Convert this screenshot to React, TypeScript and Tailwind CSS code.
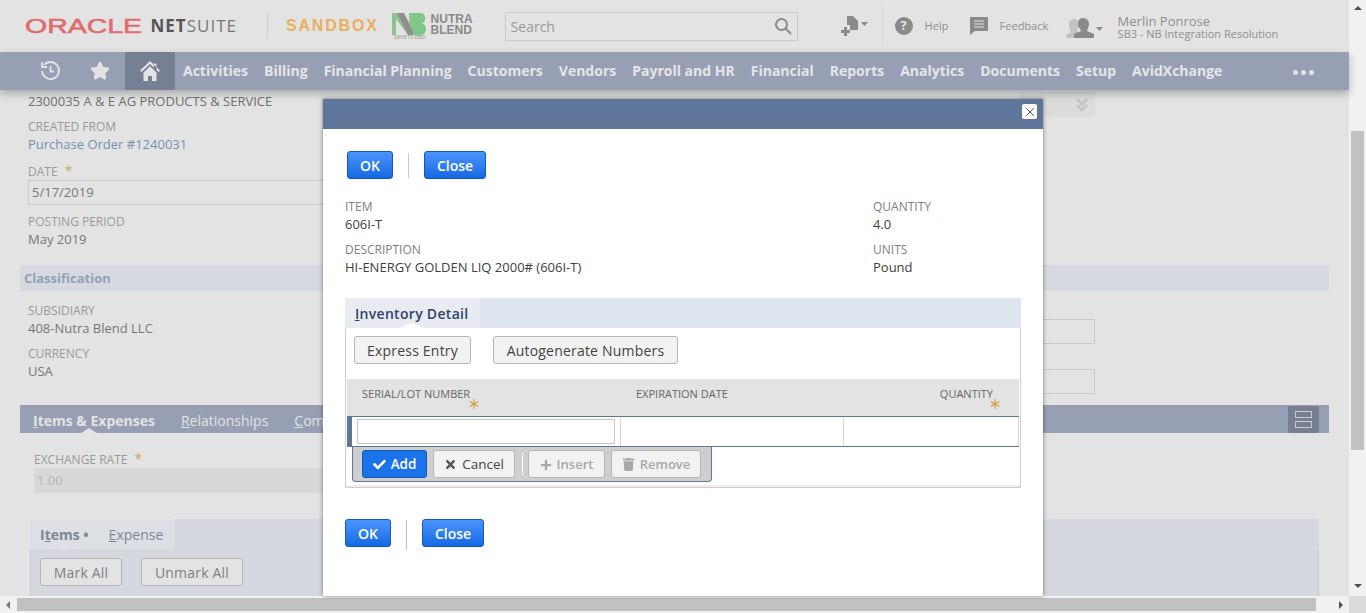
import { ChevronsDown, Star, X } from "lucide-react";
import { FaCheck, FaPlus, FaTimes, FaTrash } from "react-icons/fa";

const navItems = [
  "Activities",
  "Billing",
  "Financial Planning",
  "Customers",
  "Vendors",
  "Payroll and HR",
  "Financial",
  "Reports",
  "Analytics",
  "Documents",
  "Setup",
  "AvidXchange",
];

const Label = ({ children, dark }: { children: React.ReactNode; dark?: boolean }) => (
  <div className={`pt-[1px] text-[12px] leading-[17px] uppercase ${dark ? "text-[#808080]" : "text-[#999]"}`}>{children}</div>
);

const Field = ({ label, value, link, dark }: { label: string; value: string; link?: boolean; dark?: boolean }) => (
  <div className="mb-[7px]">
    <Label dark={dark}>{label}</Label>
    <div className={`text-[13px] leading-[18px] ${link ? "text-[#7390b2]" : dark ? "text-[#404040]" : "text-[#777]"}`}>{value}</div>
  </div>
);

const BlueButton = ({ children, className }: { children: React.ReactNode; className?: string }) => (
  <button className={`h-[28px] rounded-[3px] border border-[#125ab2] bg-linear-to-b from-[#4a94fb] to-[#1469e3] text-[14px] font-semibold text-white ${className}`}>
    {children}
  </button>
);

const GrayButton = ({ children, className }: { children: React.ReactNode; className?: string }) => (
  <button className={`flex h-[28px] items-center justify-center gap-[5px] rounded-[3px] border border-[#b5b5b5] bg-[#f2f2f2] ${className}`}>
    {children}
  </button>
);

const RequiredStar = ({ className }: { className: string }) => (
  <svg width="10" height="10" viewBox="0 0 10 10" className={`absolute ${className}`} stroke="#d39b3a" strokeWidth="1.1">
    <path d="M5 0v10M.7 2.500l8.600 5M.7 7.500l8.600-5" />
  </svg>
);

const Modal = () => (
  <div className="absolute left-[323px] top-[99px] z-20 h-[497px] w-[720px] bg-white shadow-[0_0_4px_rgba(0,0,0,0.5)]">
    <div className="flex h-[30px] items-start justify-end bg-[#5f7599] pr-[6px] pt-[5px]">
      <div className="flex h-[15px] w-[15px] items-center justify-center rounded-[2px] bg-white">
        <X size={14} strokeWidth={1.3} className="text-[#222]" />
      </div>
    </div>
    <div className="flex items-center px-[24px] pt-[22px]">
      <BlueButton className="w-[46px]">OK</BlueButton>
      <div className="mx-[15px] h-[25px] w-px bg-[#c8c8c8]" />
      <BlueButton className="w-[62px]">Close</BlueButton>
    </div>
    <div className="mt-[18px] flex px-[22px]">
      <div className="w-[528px]">
        <Field dark label="Item" value="606I-T" />
        <Field dark label="Description" value="HI-ENERGY GOLDEN LIQ 2000# (606I-T)" />
      </div>
      <div>
        <Field dark label="Quantity" value="4.0" />
        <Field dark label="Units" value="Pound" />
      </div>
    </div>
    <div className="mx-[22px] mt-[15px] w-[676px]">
      <div className="h-[30px] bg-[#dfe5ee]">
        <div className="relative flex h-[30px] w-[135px] items-center bg-[#e8ecf2] pl-[10px] text-[14px] font-semibold tracking-[0.3px] text-[#2f4468]">
          <span>
            <span className="underline">I</span>nventory Detail
          </span>
          <div className="absolute bottom-0 left-[55px] h-0 w-0 border-x-[12px] border-b-[5px] border-x-transparent border-b-white" />
        </div>
      </div>
      <div className="h-[160px] border border-t-0 border-[#cfcfcf] px-[1px] shadow-[inset_0_-2px_0_#eeeeee]">
        <div className="flex gap-[22px] pl-[7px] pt-[8px] text-[14px] tracking-[0.2px] text-[#444]">
          <GrayButton className="w-[117px]">Express Entry</GrayButton>
          <GrayButton className="w-[185px]">Autogenerate Numbers</GrayButton>
        </div>
        <div className="mt-[15px] flex h-[37px] bg-[#e3e3e3] text-[11px] text-[#666]">
          <div className="relative w-[274px] pl-[15px] pt-[7px]">
            SERIAL/LOT NUMBER
            <RequiredStar className="left-[122px] top-[20px]" />
          </div>
          <div className="w-[223px] pl-[15px] pt-[7px]">EXPIRATION DATE</div>
          <div className="relative flex-1 pr-[26px] pt-[7px] text-right">
            QUANTITY
            <RequiredStar className="right-[19px] top-[20px]" />
          </div>
        </div>
        <div className="flex h-[31px] border-y border-l-[5px] border-[#5f7599]">
          <div className="w-[269px] border-r border-[#d5d5d5] pl-[5px] pt-[2px]">
            <div className="h-[25px] w-[258px] border border-[#c4c4c4] bg-white" />
          </div>
          <div className="w-[223px] border-r border-[#d5d5d5]" />
          <div className="flex-1 border-r border-[#d5d5d5]" />
        </div>
        <div className="ml-[5px] flex h-[35px] w-[360px] items-center gap-[6px] rounded-b-[4px] border border-t-0 border-[#5f7599] bg-[#cfcfcf] pl-[9px]">
          <button className="flex h-[28px] w-[65px] items-center justify-center gap-[5px] rounded-[3px] border border-[#125ab2] bg-[#1a73e8] text-[13.500px] font-semibold text-white">
            <FaCheck size={13} />
            Add
          </button>
          <GrayButton className="w-[82px] text-[13.500px] font-medium text-[#444]">
            <FaTimes size={13} className="text-[#555]" />
            Cancel
          </GrayButton>
          <div className="ml-[1px] mr-[-1px] h-[22px] w-px bg-white" />
          <GrayButton className="w-[77px] pt-[1px] text-[13px] font-semibold text-[#a8a8a8]">
            <FaPlus size={12} />
            Insert
          </GrayButton>
          <GrayButton className="w-[90px] pt-[1px] text-[13px] font-semibold text-[#a8a8a8]">
            <FaTrash size={13} />
            Remove
          </GrayButton>
        </div>
      </div>
    </div>
    <div className="mt-[31px] flex items-start px-[22px]">
      <BlueButton className="w-[46px]">OK</BlueButton>
      <div className="mx-[15px] mt-[1px] h-[30px] w-px bg-[#bbb]" />
      <BlueButton className="w-[62px]">Close</BlueButton>
    </div>
  </div>
);

export default function App() {
  return (
    <div className="relative flex h-[613px] w-[1366px] overflow-hidden bg-[#e3e3e3] font-['Open_Sans',sans-serif]">
      <div className="flex h-[613px] w-[1349px] flex-col">
        {/* top bar */}
        <header className="flex h-[52px] shrink-0 items-center">
          <div className="ml-[25px] flex w-[212px] items-center">
            <div className="w-[117px] font-['Liberation_Sans',sans-serif] text-[19.500px] leading-[20px] text-[#e06c6c] [-webkit-text-stroke:0.5px_#e06c6c]">
              <span className="inline-block origin-left scale-x-[1.46]">ORACLE</span>
            </div>
            <div className="ml-[10px] whitespace-nowrap text-[17px] font-bold leading-[20px] tracking-[1px] text-[#555]">
              NET<span className="font-normal text-[#777]">SUITE</span>
            </div>
          </div>
          <div className="ml-[30px] h-[26px] w-px bg-[#ccc]" />
          <span className="ml-[18px] font-['Liberation_Sans',sans-serif] text-[16px] font-bold tracking-[1.800px] text-[#e8b05c]">
            SANDBOX
          </span>
          <div className="ml-[13px] flex w-[36px] flex-col items-center">
            <svg width="36" height="22" viewBox="0 0 36 22">
              <path d="M0 0h6l11 16V0h4v22h-5L4 6v16H0z" fill="#8cc48c" />
              <path d="M5 0h7l11 22h-7z" fill="#8f8f8f" />
              <path d="M21 0h8c5 0 6 9 1 10.500 6 1 5 11.500-1 11.500h-8z" fill="#7fc68a" />
            </svg>
            <div className="whitespace-nowrap text-[4.500px] leading-[5px] text-[#8a8a8a]">DRIVE TO FEED</div>
          </div>
          <div className="ml-[3px] mb-[3px] w-[42px] font-['Liberation_Sans',sans-serif] text-[12px] font-bold leading-[11px] text-[#8a8a8a]">
            <div>NUTRA</div>
            <div>BLEND</div>
          </div>
          <div className="ml-[32px] flex h-[29px] w-[293px] items-center justify-between border border-[#c9c9c9] px-[5px] text-[14px] text-[#999]">
            Search
            <svg width="18" height="18" viewBox="0 0 18 18" fill="none" stroke="#8a8a8a" strokeWidth="2">
              <circle cx="7.500" cy="7.500" r="5.500" />
              <path d="M11.500 11.500 17 17" />
            </svg>
          </div>
          <svg width="28" height="20" viewBox="0 0 28 20" className="ml-[43px]" fill="#8a8a8a">
            <path d="M6 0h6l5 5v9H9V9H6z" />
            <path d="M3 11h3v3h3v3H6v3H3v-3H0v-3h3z" />
            <path d="M20 6h7l-3.500 4z" />
          </svg>
          <div className="ml-[13px] h-[42px] w-px bg-[#d5d5d5]" />
          <div className="ml-[12px] flex h-[18px] w-[18px] items-center justify-center rounded-full bg-[#8a8a8a] text-[13px] font-bold text-[#e3e3e3]">
            ?
          </div>
          <span className="ml-[12px] mt-[1px] w-[24px] text-[11px] text-[#8f8f8f]">Help</span>
          <svg width="20" height="20" viewBox="0 0 20 20" className="ml-[20px]" fill="#8a8a8a">
            <path d="M1 1h18v14H6l-5 4z" />
            <path d="M5 5h10M5 8h10M5 11h10" stroke="#e3e3e3" strokeWidth="1" />
          </svg>
          <span className="ml-[11px] mt-[1px] w-[49px] text-[11px] text-[#8f8f8f]">Feedback</span>
          <svg width="37" height="24" viewBox="0 0 37 24" className="ml-[17px] mt-[4px]">
            <path d="M8 3c3 0 5 2 5 6 0 3-2 5-2 6l3 2v5H0v-3l5-3c0-1-2-3-2-6 0-5 2-7 5-7z" fill="#c2c2c2" />
            <path d="M17 2c4 0 6 3 6 6s-2 6-2 7l7 3v4H8v-4l7-3c0-1-3-4-3-7s1-6 5-6z" fill="#8a8a8a" />
            <path d="M30 11h7l-3.500 4z" fill="#8a8a8a" />
          </svg>
          <div className="ml-[15px] pt-[3px]">
            <div className="text-[13px] leading-[13px] text-[#8f8f8f]">Merlin Ponrose</div>
            <div className="text-[11px] leading-[12px] text-[#8f8f8f]">SB3 - NB Integration Resolution</div>
          </div>
        </header>

        {/* nav */}
        <nav className="relative z-10 flex h-[38px] shrink-0 items-center bg-[#969fb3] shadow-[0_4px_8px_rgba(0,0,0,0.25)]">
          <div className="flex w-[125px] items-center">
            <svg width="22" height="22" viewBox="0 0 22 22" className="ml-[39px]" fill="none" stroke="#e3e3e3" strokeWidth="1.800">
              <path d="M5 5a8.500 8.500 0 1 1-2 6" />
              <path d="M3 2v5h5" />
              <path d="M11.500 6v5.500H15" />
            </svg>
            <Star size={20} className="ml-[29px] fill-[#e3e3e3] text-[#e3e3e3]" />
          </div>
          <div className="flex h-[38px] w-[50px] items-center justify-center bg-[#767f94]">
            <svg width="22" height="22" viewBox="0 0 22 22" fill="#e3e3e3">
              <path d="M11 1 1 10.500l1.500 1.500L11 4l4 3.800V3.500h2.500v6.600L19.500 12l1.500-1.500z" />
              <path d="M4.500 12.500 11 6.300l6.500 6.200V21h-4.500v-5H9v5H4.500z" />
            </svg>
          </div>
          <div className="ml-[8px] flex gap-[16px] pb-[2px] text-[14px] font-bold text-[#e6e6e6]">
            {navItems.map((item) => (
              <span key={item}>{item}</span>
            ))}
          </div>
          <div className="ml-[71px] mt-[3px] flex gap-[3px]">
            <div className="h-[5px] w-[5px] rounded-full bg-[#e3e3e3]" />
            <div className="h-[5px] w-[5px] rounded-full bg-[#e3e3e3]" />
            <div className="h-[5px] w-[5px] rounded-full bg-[#e3e3e3]" />
          </div>
        </nav>

        {/* page behind the dialog */}
        <main className="relative flex-1 overflow-hidden">
          <div className="absolute left-[1020px] top-[2px] flex h-[25px] w-[75px] items-center justify-end bg-[#dcdcdc] pr-[3px]">
            <ChevronsDown size={20} strokeWidth={3.500} className="text-[#c6c6c6]" />
          </div>
          <div className="px-[28px] pt-[2px]">
            <div className="mb-[7px] text-[13px] leading-[18px] text-[#6f6f6f]">2300035 A &amp; E AG PRODUCTS &amp; SERVICE</div>
            <Field label="Created From" value="Purchase Order #1240031" link />
            <div className="h-[1px]" />
            <Label>
              Date <span className="ml-[4px] text-[14px] text-[#c9a66b]">*</span>
            </Label>
            <div className="mb-[7px] flex h-[25px] w-[320px] items-center border border-[#c9c9c9] pl-[3px] pt-[1px] text-[13px] text-[#777]">5/17/2019</div>
            <Field label="Posting Period" value="May 2019" />
          </div>
          <div className="mx-[20px] mt-[17px] flex h-[26px] items-center bg-[#d6dae0] pl-[4px] pt-[1px] text-[13px] font-bold text-[#94a0b4]">
            Classification
          </div>
          <div className="relative px-[28px] pt-[10px]">
            <Field label="Subsidiary" value="408-Nutra Blend LLC" />
            <Field label="Currency" value="USA" />
            <div className="absolute left-[1040px] top-[28px] h-[25px] w-[55px] border border-[#c9c9c9]" />
            <div className="absolute left-[1040px] top-[78px] h-[25px] w-[55px] border border-[#c9c9c9]" />
          </div>
          <div className="mx-[20px] mt-[25px] flex h-[28px] items-center justify-between bg-[#969fb3]">
            <div className="relative flex h-[28px] items-center pl-[13px] pt-[2px] text-[14px] text-[#e3e3e3]">
              <span className="font-bold">
                <span className="underline">I</span>tems &amp; Expenses
              </span>
              <span className="ml-[26px]">
                <span className="underline">R</span>elationships
              </span>
              <span className="ml-[26px]">
                <span className="underline">C</span>om
              </span>
              <div className="absolute bottom-0 left-[61px] h-0 w-0 border-x-[8px] border-b-[5px] border-x-transparent border-b-[#e3e3e3]" />
            </div>
            <div className="mr-[10px] flex h-[27px] w-[31px] flex-col items-center justify-center gap-[3px] rounded-[2px] bg-[#767f94]">
              <div className="h-[7px] w-[17px] border border-[#c9c9c9]" />
              <div className="h-[7px] w-[17px] border border-[#c9c9c9]" />
            </div>
          </div>
          <div className="px-[34px] pt-[16px]">
            <Label>
              Exchange Rate <span className="ml-[4px] text-[14px] text-[#c9a66b]">*</span>
            </Label>
            <div className="flex h-[25px] w-[300px] items-center bg-[#d8d8d8] pl-[3px] text-[13px] text-[#b5b5b5]">1.00</div>
          </div>
          <div className="mx-[30px] mt-[26px] h-[77px] bg-[#d5d8de]">
            <div className="relative flex h-[30px] w-[144px] items-center bg-[#dcdfe4] pl-[10px] text-[14px]">
              <span className="font-bold text-[#7f8795]">
                I<span className="underline">t</span>ems •
              </span>
              <span className="ml-[20px] text-[#7f8795]">
                <span className="underline">E</span>xpense
              </span>
              <div className="absolute bottom-0 left-[23px] h-0 w-0 border-x-[11px] border-b-[5px] border-x-transparent border-b-[#e3e3e3]" />
            </div>
            <div className="flex h-[47px] gap-[19px] border-x border-[#c9c9c9] pl-[9px] pt-[9px] text-[14px] tracking-[0.2px] text-[#808080]">
              <button className="h-[28px] w-[82px] rounded-[3px] border border-[#b5b5b5] bg-[#e3e3e3]">Mark All</button>
              <button className="h-[28px] w-[102px] rounded-[3px] border border-[#b5b5b5] bg-[#e3e3e3]">Unmark All</button>
            </div>
          </div>
        </main>

        {/* horizontal scrollbar */}
        <div className="flex h-[17px] shrink-0 items-center bg-[#f1f1f1]">
          <div className="ml-[6px] h-0 w-0 border-y-[4px] border-r-[4px] border-y-transparent border-r-[#777]" />
          <div className="ml-[7px] h-[13px] w-[1299px] bg-[#c1c1c1]" />
          <div className="ml-[23px] h-0 w-0 border-y-[4px] border-l-[4px] border-y-transparent border-l-[#505050]" />
        </div>
      </div>

      {/* vertical scrollbar */}
      <div className="flex h-[613px] w-[17px] shrink-0 flex-col items-center bg-[#f1f1f1] pt-[6px]">
        <div className="h-0 w-0 border-x-[4px] border-b-[4px] border-x-transparent border-b-[#505050]" />
        <div className="mt-[121px] h-[319px] w-[13px] bg-[#c1c1c1]" />
        <div className="mt-[134px] h-0 w-0 border-x-[4px] border-t-[4px] border-x-transparent border-t-[#505050]" />
        <div className="mt-[8px] h-[17px] w-[17px] bg-[#dcdcdc]" />
      </div>

      <Modal />
    </div>
  );
}
